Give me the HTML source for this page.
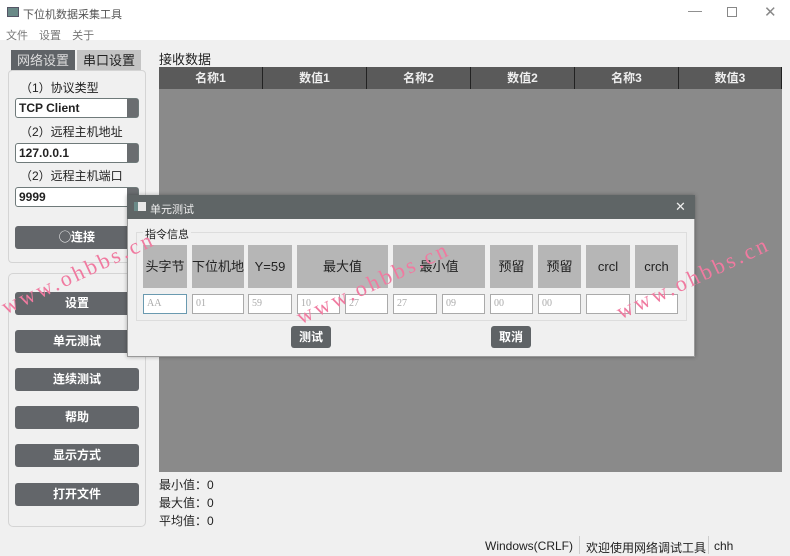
<!DOCTYPE html>
<html><head><meta charset="utf-8"><style>
*{box-sizing:border-box;margin:0;padding:0}
body{width:790px;height:555px;position:relative;overflow:hidden;background:#f0f0f0;font-family:"Liberation Sans","Noto Sans CJK SC",sans-serif;font-size:12px;color:#222}
.a{position:absolute}
.btn{position:absolute;left:15px;width:124px;height:23px;background:#63666a;border-radius:3px;color:#fff;font-weight:bold;font-size:12px;text-align:center;line-height:23px}
.combo{position:absolute;left:15px;width:124px;height:20px;background:#fff;border:1px solid #6f7a7a;border-radius:3px;font-weight:bold;font-size:12px;line-height:18px;padding-left:3px}
.combo i{position:absolute;right:0;top:0;width:11px;height:18px;background:#6a6d70}
.lbl{position:absolute;left:20px;font-size:12px}
.th{position:absolute;top:67px;height:22px;background:#5a5a5a;color:#eee;font-weight:bold;text-align:center;line-height:22px;border-right:1px solid #222;font-size:12px}
.hc{position:absolute;top:245px;height:43px;background:#b6b6b6;text-align:center;line-height:43px;font-size:13px;color:#222;white-space:nowrap;overflow:hidden}
.in{position:absolute;top:294px;height:20px;background:#fff;border:1px solid #aaa;font-size:10px;color:#aaa;line-height:18px;padding-left:3px;font-family:"Liberation Serif",serif}
.db{position:absolute;top:326px;width:40px;height:22px;background:#5f6366;border-radius:3px;color:#fff;font-weight:bold;text-align:center;line-height:22px}
.wm{position:absolute;color:#f07aa0;font-family:"Liberation Serif",serif;font-size:22px;transform:rotate(-25deg);letter-spacing:3px;white-space:nowrap}
</style></head><body>
<div class="a" style="left:0;top:0;width:790px;height:40px;background:#fff"></div>
<div class="a" style="left:7px;top:7px;width:12px;height:10px;border:1px solid #556;background:#6a8a88"></div>
<div class="a" style="left:23px;top:6px;color:#555;font-size:11px">下位机数据采集工具</div>
<div class="a" style="left:688px;top:2px;color:#888;font-size:14px">—</div>
<div class="a" style="left:727px;top:7px;width:10px;height:10px;border:1px solid #888"></div>
<div class="a" style="left:764px;top:3px;color:#888;font-size:15px">✕</div>
<div class="a" style="left:6px;top:27px;color:#777;font-size:11px;word-spacing:8px">文件 设置 关于</div>
<div class="a" style="left:11px;top:50px;width:64px;height:21px;background:#5f6367;color:#ddd;font-size:13px;text-align:center;line-height:21px">网络设置</div>
<div class="a" style="left:77px;top:50px;width:64px;height:21px;background:#c4c4c4;color:#222;font-size:13px;text-align:center;line-height:21px">串口设置</div>
<div class="a" style="left:8px;top:70px;width:138px;height:193px;border:1px solid #d4d4d4;border-radius:4px"></div>
<div class="lbl" style="top:79px">（1）协议类型</div>
<div class="combo" style="top:98px">TCP Client<i></i></div>
<div class="lbl" style="top:123px">（2）远程主机地址</div>
<div class="combo" style="top:143px">127.0.0.1<i></i></div>
<div class="lbl" style="top:167px">（2）远程主机端口</div>
<div class="combo" style="top:187px">9999<i></i></div>
<div class="btn" style="top:226px">◯连接</div>
<div class="a" style="left:8px;top:273px;width:138px;height:254px;border:1px solid #d4d4d4;border-radius:5px"></div>
<div class="btn" style="top:292px">设置</div>
<div class="btn" style="top:330px">单元测试</div>
<div class="btn" style="top:368px">连续测试</div>
<div class="btn" style="top:406px">帮助</div>
<div class="btn" style="top:444px">显示方式</div>
<div class="btn" style="top:483px">打开文件</div>
<div class="a" style="left:159px;top:49px;font-size:13px">接收数据</div>
<div class="a" style="left:159px;top:89px;width:623px;height:383px;background:#8a8a8a"></div>
<div class="th" style="left:159px;width:104px">名称1</div>
<div class="th" style="left:263px;width:104px">数值1</div>
<div class="th" style="left:367px;width:104px">名称2</div>
<div class="th" style="left:471px;width:104px">数值2</div>
<div class="th" style="left:575px;width:104px">名称3</div>
<div class="th" style="left:679px;width:103px">数值3</div>
<div class="a" style="left:159px;top:476px;font-size:12px;line-height:18px">最小值：0<br>最大值：0<br>平均值：0</div>
<div class="a" style="left:0;top:533px;width:790px;height:22px;background:#f0f0f0"></div>
<div class="a" style="left:485px;top:539px;font-size:12px">Windows(CRLF)</div>
<div class="a" style="left:579px;top:536px;width:1px;height:18px;background:#ccc"></div>
<div class="a" style="left:586px;top:539px;font-size:12px">欢迎使用网络调试工具</div>
<div class="a" style="left:708px;top:536px;width:1px;height:18px;background:#ccc"></div>
<div class="a" style="left:714px;top:539px;font-size:12px">chh</div>
<!-- dialog -->
<div class="a" style="left:127px;top:195px;width:568px;height:162px;background:#f0f0f0;border:1px solid #999;box-shadow:0 0 4px rgba(0,0,0,.3)"></div>
<div class="a" style="left:127px;top:195px;width:568px;height:24px;background:#5f6566"></div>
<div class="a" style="left:134px;top:202px;width:12px;height:9px;background:#e8e8e8;border-left:4px solid #6a8a88"></div>
<div class="a" style="left:150px;top:201px;color:#eee;font-size:11px">单元测试</div>
<div class="a" style="left:675px;top:199px;color:#eee;font-size:13px">✕</div>
<div class="a" style="left:136px;top:232px;width:551px;height:89px;border:1px solid #ddd"></div>
<div class="a" style="left:143px;top:226px;font-size:11px;background:#f0f0f0;padding:0 2px">指令信息</div>
<div class="hc" style="left:143px;width:44px">头字节</div>
<div class="hc" style="left:192px;width:52px">下位机地址</div>
<div class="hc" style="left:248px;width:44px">Y=59</div>
<div class="hc" style="left:297px;width:91px">最大值</div>
<div class="hc" style="left:393px;width:92px">最小值</div>
<div class="hc" style="left:490px;width:43px">预留</div>
<div class="hc" style="left:538px;width:43px">预留</div>
<div class="hc" style="left:586px;width:44px">crcl</div>
<div class="hc" style="left:635px;width:43px">crch</div>
<div class="in" style="left:143px;width:44px;border-color:#6a9ab0">AA</div>
<div class="in" style="left:192px;width:52px">01</div>
<div class="in" style="left:248px;width:44px">59</div>
<div class="in" style="left:297px;width:43px">10</div>
<div class="in" style="left:345px;width:43px">27</div>
<div class="in" style="left:393px;width:44px">27</div>
<div class="in" style="left:442px;width:43px">09</div>
<div class="in" style="left:490px;width:43px">00</div>
<div class="in" style="left:538px;width:43px">00</div>
<div class="in" style="left:586px;width:44px"></div>
<div class="in" style="left:635px;width:43px"></div>
<div class="db" style="left:291px">测试</div>
<div class="db" style="left:491px">取消</div>
<div class="wm" style="left:-5px;top:260px">www.ohbbs.cn</div>
<div class="wm" style="left:290px;top:270px">www.ohbbs.cn</div>
<div class="wm" style="left:610px;top:265px">www.ohbbs.cn</div>
</body></html>
